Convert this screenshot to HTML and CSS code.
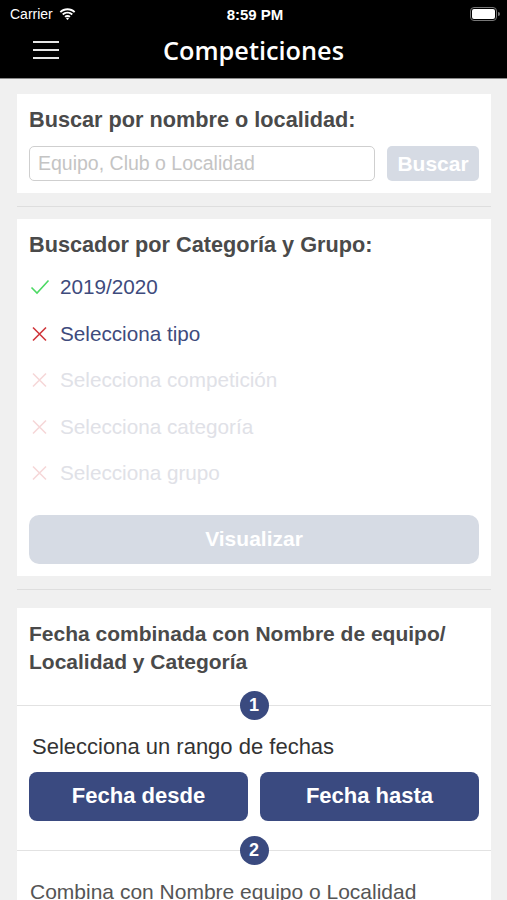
FILE: index.html
```html
<!DOCTYPE html>
<html lang="es">
<head>
    <meta charset="UTF-8">
    <meta name="viewport" content="width=device-width, initial-scale=1.0">
    <title>Competiciones</title>
    <link rel="stylesheet" href="styles.css">
</head>
<body>

<div class="status-bar">
    <div class="status-left">
        <span>Carrier</span>
        <svg class="wifi" width="17" height="12" viewBox="0 0 17 12">
            <path d="M8.5 2.2c2.5 0 4.8 1 6.5 2.6l1.3-1.4C14.2 1.4 11.5.2 8.5.2S2.8 1.4.7 3.4L2 4.8c1.7-1.6 4-2.6 6.5-2.6z" fill="#fff"/>
            <path d="M8.5 5.6c1.6 0 3 .6 4.1 1.6l1.3-1.4C12.5 4.5 10.6 3.7 8.5 3.7S4.5 4.5 3.1 5.8l1.3 1.4c1.1-1 2.5-1.6 4.1-1.6z" fill="#fff"/>
            <path d="M8.5 8.9c.7 0 1.3.3 1.8.7l1.3-1.4c-.8-.8-1.9-1.2-3.1-1.2s-2.3.4-3.1 1.2l1.3 1.4c.5-.4 1.1-.7 1.8-.7zM8.5 12l1.5-1.6c-.4-.4-.9-.6-1.5-.6s-1.1.2-1.5.6z" fill="#fff"/>
        </svg>
    </div>
    <div class="status-time">8:59 PM</div>
    <div class="status-right">
        <span class="battery"><span class="battery-level"></span></span>
        <span class="battery-nub"></span>
    </div>
</div>

<header class="navbar">
    <button class="menu-btn" type="button" aria-label="Menú">
        <span></span><span></span><span></span>
    </button>
    <h1>Competiciones</h1>
</header>

<main class="content">

    <section class="card search-card">
        <h2>Buscar por nombre o localidad:</h2>
        <div class="search-row">
            <input type="text" class="search-input" placeholder="Equipo, Club o Localidad">
            <button type="button" class="btn btn-disabled btn-search">Buscar</button>
        </div>
    </section>

    <hr class="separator">

    <section class="card">
        <h2>Buscador por Categoría y Grupo:</h2>
        <ul class="steps">
            <li class="step done">
                <svg width="20" height="16" viewBox="0 0 20 16"><path d="M1.5 8.5l5.5 5.5L18.5 1.5" fill="none" stroke="#4cd964" stroke-width="1.6"/></svg>
                <span>2019/2020</span>
            </li>
            <li class="step pending">
                <svg width="20" height="16" viewBox="0 0 20 16"><path d="M3 1.5l13 13M16 1.5l-13 13" fill="none" stroke="#d0363b" stroke-width="1.6"/></svg>
                <span>Selecciona tipo</span>
            </li>
            <li class="step locked">
                <svg width="20" height="16" viewBox="0 0 20 16"><path d="M3 1.5l13 13M16 1.5l-13 13" fill="none" stroke="#f6d7d8" stroke-width="1.6"/></svg>
                <span>Selecciona competición</span>
            </li>
            <li class="step locked">
                <svg width="20" height="16" viewBox="0 0 20 16"><path d="M3 1.5l13 13M16 1.5l-13 13" fill="none" stroke="#f6d7d8" stroke-width="1.6"/></svg>
                <span>Selecciona categoría</span>
            </li>
            <li class="step locked">
                <svg width="20" height="16" viewBox="0 0 20 16"><path d="M3 1.5l13 13M16 1.5l-13 13" fill="none" stroke="#f6d7d8" stroke-width="1.6"/></svg>
                <span>Selecciona grupo</span>
            </li>
        </ul>
        <button type="button" class="btn btn-disabled btn-wide">Visualizar</button>
    </section>

    <hr class="separator separator-wide">

    <section class="card combo-card">
        <h2 class="combo-title">Fecha combinada con Nombre de equipo/ Localidad y Categoría</h2>

        <div class="step-divider"><span class="badge">1</span></div>

        <div class="combo-block">
            <p class="combo-label">Selecciona un rango de fechas</p>
            <div class="date-row">
                <button type="button" class="btn btn-primary">Fecha desde</button>
                <button type="button" class="btn btn-primary">Fecha hasta</button>
            </div>
        </div>

        <div class="step-divider"><span class="badge">2</span></div>

        <div class="combo-block">
            <p class="combo-label muted">Combina con Nombre equipo o Localidad</p>
        </div>
    </section>

</main>

</body>
</html>
```

FILE: styles.css
```css
body {
    margin: 0;
    background-color: #f0f0f0;
    font-family: 'Liberation Sans', Arial, sans-serif;
    color: #333;
    height: 900px;
    overflow: hidden;
}

/* status bar */
.status-bar {
    height: 28px;
    background: #000;
    color: #fff;
    display: flex;
    align-items: center;
    justify-content: space-between;
    padding: 0 7px 0 10px;
    font-size: 14px;
}
.status-left {
    display: flex;
    align-items: center;
    gap: 6px;
    width: 120px;
}
.status-time {
    font-weight: 600;
    font-size: 15px;
}
.status-right {
    width: 120px;
    display: flex;
    justify-content: flex-end;
    align-items: center;
}
.battery {
    width: 23px;
    height: 10px;
    border: 1.5px solid #777;
    border-radius: 4px;
    padding: 1px;
    display: flex;
}
.battery-level {
    flex: 1;
    background: #fff;
    border-radius: 2px;
}
.battery-nub {
    width: 2px;
    height: 4px;
    background: #777;
    border-radius: 0 2px 2px 0;
    margin-left: 1px;
}

/* navbar */
.navbar {
    height: 51px;
    box-sizing: border-box;
    padding-bottom: 7px;
    background: #000;
    border-bottom: 1px solid #8a8a8a;
    display: flex;
    align-items: center;
    justify-content: center;
    position: relative;
}
.navbar h1 {
    margin: 0;
    color: #fff;
    font-family: 'Open Sans', sans-serif;
    font-weight: 600;
    font-size: 25.3px;
}
.menu-btn {
    position: absolute;
    left: 33px;
    top: 11px;
    width: 26px;
    height: 22px;
    background: none;
    border: none;
    display: flex;
    flex-direction: column;
    justify-content: space-between;
    padding: 2px 0;
}
.menu-btn span {
    display: block;
    height: 2px;
    background: #e6e6e6;
}

/* content */
.content {
    padding: 15px 16px 0 17px;
}
.card {
    background: #fff;
    padding: 12px;
}
.card h2 {
    margin: 0;
    font-size: 21.7px;
    font-weight: 700;
    color: #4a4a4a;
    line-height: 28px;
}
.separator {
    border: none;
    border-top: 1px solid #dedede;
    margin: 13px 0 12px;
}
.separator-wide {
    margin-bottom: 18px;
}

.search-row {
    display: flex;
    gap: 12px;
    margin-top: 12px;
}
.search-input {
    flex: 1;
    height: 35px;
    box-sizing: border-box;
    border: 1px solid #cfcfcf;
    border-radius: 5px;
    padding: 0 8px;
    font-family: inherit;
    font-size: 19.5px;
    color: #333;
}
.search-input::placeholder {
    color: #c4c4c4;
}

.btn {
    border: none;
    font-family: inherit;
    font-weight: 700;
    color: #fff;
    cursor: pointer;
}
.btn-disabled {
    background: #d6dbe4;
}
.btn-search {
    width: 92px;
    height: 35px;
    border-radius: 5px;
    font-size: 21px;
}
.btn-wide {
    width: 100%;
    height: 49px;
    border-radius: 10px;
    font-size: 21px;
    margin-top: 18px;
}

.steps {
    list-style: none;
    margin: 5px 0 0;
    padding: 0;
}
.step {
    height: 46.5px;
    display: flex;
    align-items: center;
    gap: 10px;
    font-size: 20.7px;
    padding-left: 1px;
}
.step svg {
    flex: none;
}
.done, .pending {
    color: #3e4b7d;
}
.locked {
    color: #e0e1e7;
}

/* combined search */
.combo-card {
    padding: 0;
}
.card .combo-title {
    padding: 12px 12px 0;
    height: 85px;
    font-size: 21px;
}
.step-divider {
    border-top: 1px solid #e2e2e2;
    height: 0;
    display: flex;
    justify-content: center;
}
.badge {
    width: 29px;
    height: 29px;
    margin-top: -15px;
    border-radius: 50%;
    background: #3a4a7f;
    color: #fff;
    font-weight: 700;
    font-size: 18px;
    display: flex;
    align-items: center;
    justify-content: center;
}
.combo-block {
    padding: 27px 12px 29px;
}
.combo-label {
    margin: 0 0 0 3px;
    font-size: 22px;
    line-height: 28px;
    color: #333;
}
.combo-label.muted {
    margin-left: 1px;
    font-size: 21px;
    color: #555;
}
.date-row {
    display: flex;
    gap: 12px;
    margin-top: 11px;
}
.btn-primary {
    flex: 1;
    height: 49px;
    border-radius: 8px;
    background: #3a4a80;
    font-size: 22px;
}
```
